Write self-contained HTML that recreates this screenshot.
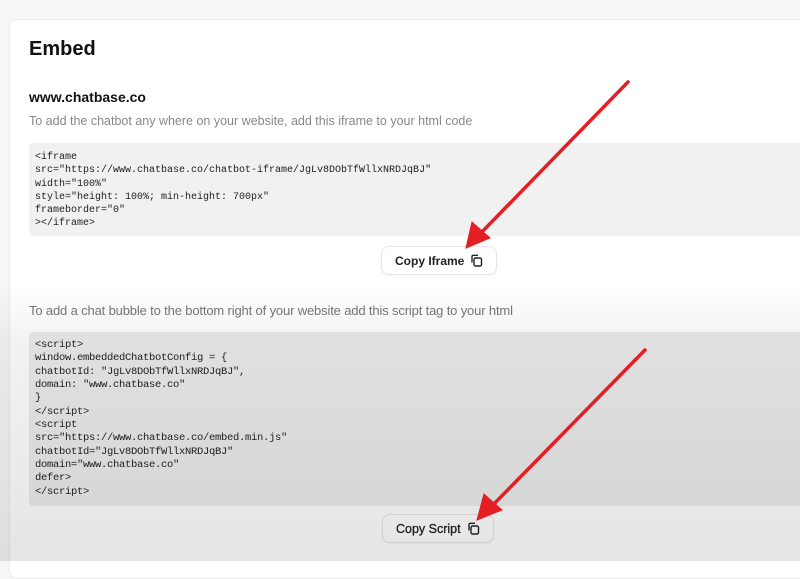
<!DOCTYPE html>
<html><head><style>
*{margin:0;padding:0;box-sizing:border-box}
body{width:800px;height:561px;overflow:hidden;background:#f7f7f7;font-family:"Liberation Sans",sans-serif;position:relative}
.card{position:absolute;left:9px;top:19px;width:820px;height:560px;background:#fff;border:1px solid #ececec;border-radius:8px}
.t{position:absolute;left:29px;color:#111}
h1{position:absolute;left:29px;top:38px;font-size:20px;font-weight:bold;color:#111}
.code{position:absolute;left:29px;width:780px;background:#f1f1f1;border-radius:4px;font-family:"Liberation Mono",monospace;font-size:10px;line-height:13.3px;color:#222;padding:8px 6px;white-space:pre}
.btn{position:absolute;height:29px;border:1px solid #e6e6e6;border-radius:8px;background:#fff;font-size:12px;font-weight:bold;color:#222;display:flex;align-items:center;padding-left:13px;box-shadow:0 1px 2px rgba(0,0,0,.05)}
.btn svg{margin-left:6px}
.shade{position:absolute;left:0;top:285px;width:800px;height:276px;background:linear-gradient(#fff0,rgba(0,0,0,.05) 20%,rgba(0,0,0,.1))}
</style></head><body>
<div class="card"></div>
<h1>Embed</h1>
<div class="t" style="top:89px;font-size:14px;font-weight:bold">www.chatbase.co</div>
<div class="t" style="top:114px;font-size:12.5px;color:#888">To add the chatbot any where on your website, add this iframe to your html code</div>
<div class="code" style="top:143px;height:93px">&lt;iframe
src="https://www.chatbase.co/chatbot-iframe/JgLv8DObTfWllxNRDJqBJ"
width="100%"
style="height: 100%; min-height: 700px"
frameborder="0"
>&lt;/iframe></div>
<div class="btn" style="left:381px;top:246px;width:116px">Copy Iframe<svg width="13" height="13" viewBox="0 0 13 13" fill="none" stroke="#222" stroke-width="1.4"><rect x="4" y="4" width="7.5" height="8" rx="1.5"/><path d="M2 8.5V2.5A1.2 1.2 0 0 1 3.2 1.3H8"/></svg></div>
<div class="t" style="top:303px;font-size:13px;color:#777;letter-spacing:-0.15px">To add a chat bubble to the bottom right of your website add this script tag to your html</div>
<div class="code" style="top:332px;height:174px;background:#ececec;letter-spacing:-0.3px;font-size:10.5px;line-height:13.35px;padding-top:7px">&lt;script>
window.embeddedChatbotConfig = {
chatbotId: "JgLv8DObTfWllxNRDJqBJ",
domain: "www.chatbase.co"
}
&lt;/script>
&lt;script
src="https://www.chatbase.co/embed.min.js"
chatbotId="JgLv8DObTfWllxNRDJqBJ"
domain="www.chatbase.co"
defer>
&lt;/script></div>
<div class="btn" style="left:382px;top:514px;width:112px;font-size:12.5px;font-weight:normal;-webkit-text-stroke:0.3px #222">Copy Script<svg width="13" height="13" viewBox="0 0 13 13" fill="none" stroke="#222" stroke-width="1.4"><rect x="4" y="4" width="7.5" height="8" rx="1.5"/><path d="M2 8.5V2.5A1.2 1.2 0 0 1 3.2 1.3H8"/></svg></div>
<div class="shade"></div>
<svg style="position:absolute;left:0;top:0" width="800" height="561">
<g stroke="#e31e24" stroke-width="3.5" fill="#e31e24" stroke-linecap="round">
<line x1="628" y1="82" x2="478" y2="236"/>
<polygon points="466,248 472,222 490,238" stroke-width="1"/>
<line x1="645" y1="350" x2="490" y2="508"/>
<polygon points="477,520 484,494 502,510" stroke-width="1"/>
</g></svg>
</body></html>
